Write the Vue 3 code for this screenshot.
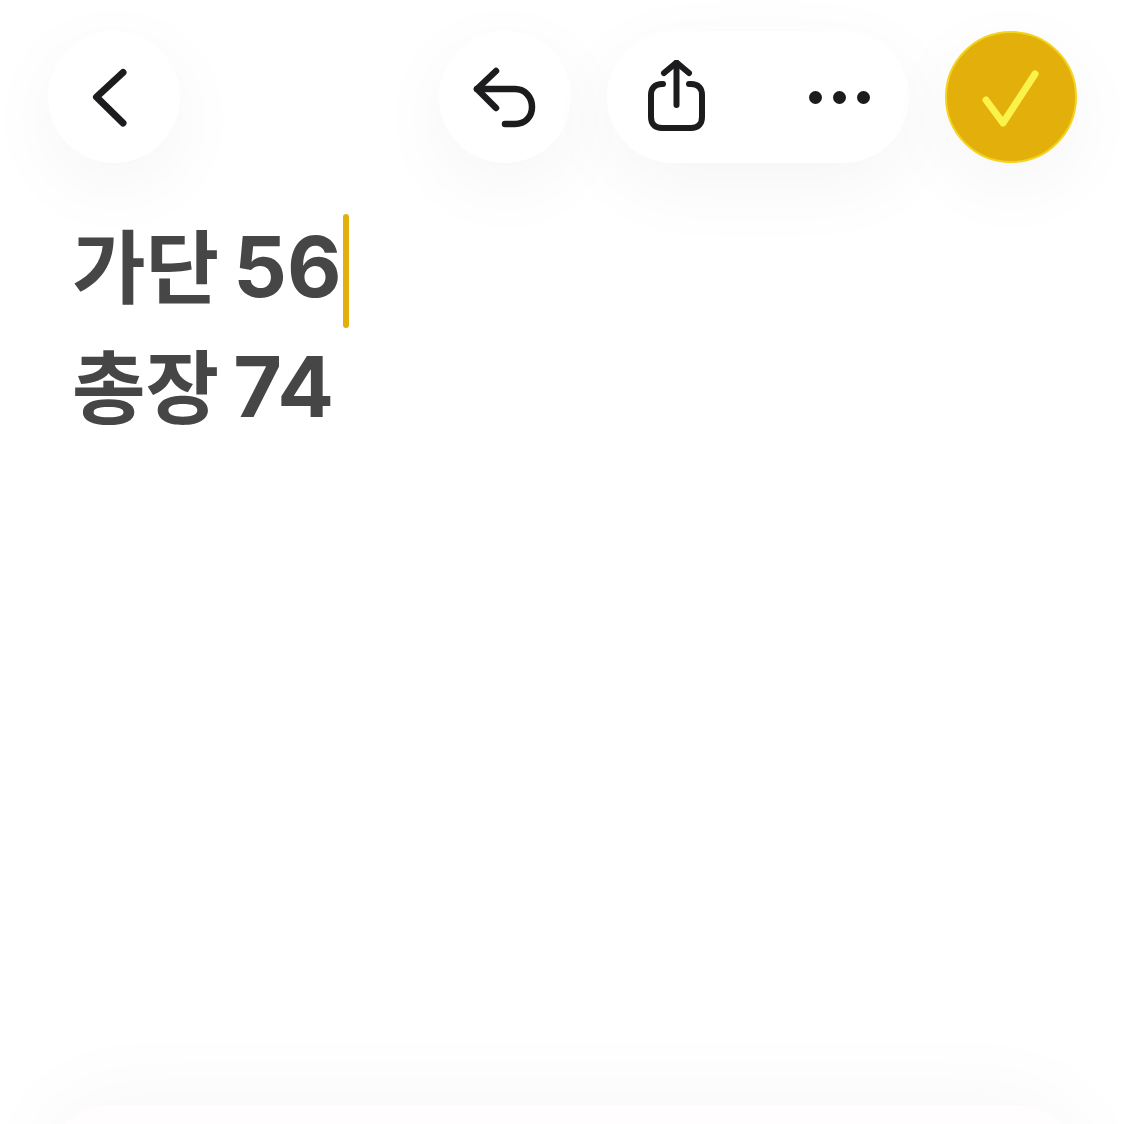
<template>
  <div class="page">
    <header class="toolbar">
      <button class="btn round">
        <svg width="132" height="132" viewBox="0 0 132 132" fill="none" stroke="#1c1c1e" stroke-width="7" stroke-linecap="round" stroke-linejoin="round">
          <path d="M75 41.5 L48.5 66 L75 92" />
        </svg>
      </button>

      <div class="right">
        <button class="btn round">
          <svg width="132" height="132" viewBox="0 0 132 132" fill="none" stroke="#1c1c1e" stroke-width="6.5" stroke-linecap="round" stroke-linejoin="round">
            <path d="M57 40 L38 58 L57 77" />
            <path d="M38 58 H76 C86 58 93 66 93 76 C93 86 86 93 76 93 H66" />
          </svg>
        </button>

        <div class="pill">
          <svg class="share" width="60" height="74" viewBox="0 0 60 74" fill="none" stroke="#1c1c1e" stroke-width="6" stroke-linecap="round" stroke-linejoin="round">
            <path d="M17 13 L29.5 2.5 L42 13" />
            <path d="M29.5 3 V45" />
            <path d="M16 24 H15 C8 24 4 28 4 35 V57 C4 64 8 68 15 68 H44 C51 68 55 64 55 57 V35 C55 28 51 24 44 24 H42" />
          </svg>
          <div class="dots">
            <span></span>
            <span></span>
            <span></span>
          </div>
        </div>

        <button class="btn round done">
          <svg width="128" height="128" viewBox="0 0 128 128" fill="none" stroke="#fbf34a" stroke-width="7" stroke-linecap="round" stroke-linejoin="round">
            <path d="M39 67 L56 90 L88 41" />
          </svg>
        </button>
      </div>
    </header>

    <main class="note">
      <p class="line">가단 <span class="num">56</span><span class="caret"></span></p>
      <p class="line">총장 <span class="num">74</span></p>
    </main>

    <div class="sheet"></div>
  </div>
</template>

<script setup>
</script>

<style>
html,
body {
  margin: 0;
  background: #fff;
}
</style>

<style scoped>
.page {
  position: relative;
  width: 1125px;
  height: 1124px;
  overflow: hidden;
  background: #fff;
  font-family: Inter, "Noto Sans CJK KR", sans-serif;
}

.toolbar {
  display: flex;
  justify-content: space-between;
  padding: 31px 48px 0;
}

.right {
  display: flex;
  gap: 36px;
}

.btn {
  padding: 0;
  border: none;
  background: #fff;
}

.round {
  width: 132px;
  height: 132px;
  border-radius: 50%;
  display: flex;
  align-items: center;
  justify-content: center;
  box-shadow: 0 22px 80px rgba(0, 0, 0, 0.045);
}

.pill {
  width: 302px;
  height: 132px;
  border-radius: 66px;
  background: #fff;
  display: flex;
  align-items: center;
  justify-content: space-between;
  padding: 0 39px 0 40px;
  box-sizing: border-box;
  box-shadow: 0 22px 80px rgba(0, 0, 0, 0.045);
}

.dots {
  display: flex;
  gap: 11px;
}

.dots span {
  width: 13px;
  height: 13px;
  border-radius: 50%;
  background: #1c1c1e;
}

.done {
  background: #e3b00b;
  border: 2px solid #f2d31e;
  box-sizing: border-box;
}

.note {
  padding: 44px 72px 0;
}

.line {
  position: relative;
  margin: 0;
  height: 120px;
  line-height: 120px;
  font-size: 80px;
  font-weight: 600;
  word-spacing: -6px;
  color: #464646;
  white-space: nowrap;
}

.num {
  font-size: 84px;
  font-weight: 700;
}

.caret {
  position: absolute;
  top: 7px;
  width: 6px;
  height: 114px;
  margin-left: 1px;
  border-radius: 3px;
  background: #e3b00b;
}

.sheet {
  position: absolute;
  left: 42px;
  right: 42px;
  top: 1105px;
  height: 200px;
  border-radius: 70px;
  background: #fffdfd;
  box-shadow: 0 -12px 90px rgba(0, 0, 0, 0.03);
}
</style>
